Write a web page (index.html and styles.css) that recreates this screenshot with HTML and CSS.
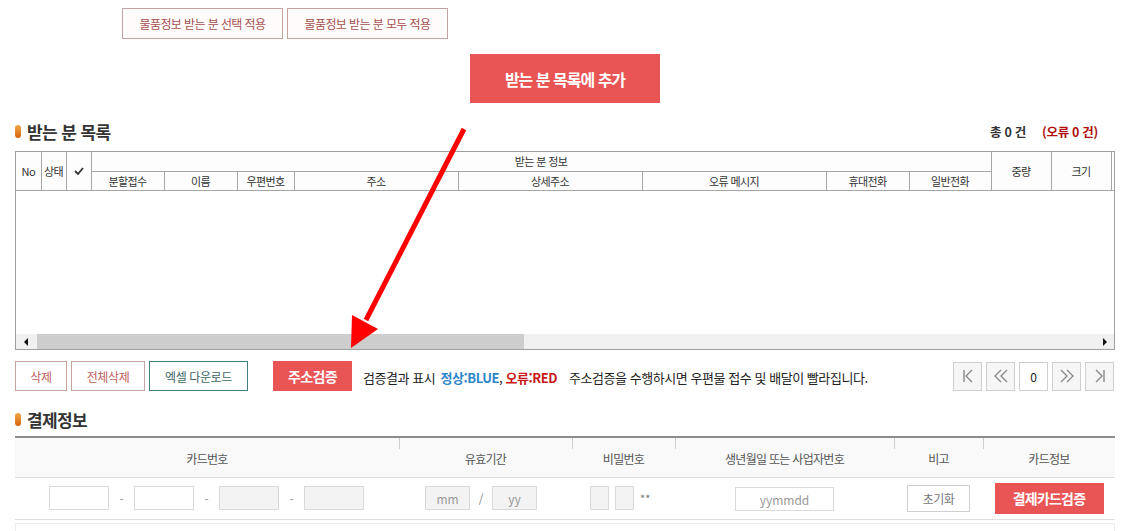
FILE: index.html
```html
<!DOCTYPE html>
<html lang="ko">
<head>
<meta charset="utf-8">
<title>받는 분 목록</title>
<link rel="stylesheet" href="styles.css">
</head>
<body>
<div class="page">
  <div class="apply-row">
    <button class="btn-line">물품정보 받는 분 선택 적용</button>
    <button class="btn-line">물품정보 받는 분 모두 적용</button>
  </div>
  <div class="add-row"><button class="btn-add">받는 분 목록에 추가</button></div>

  <div class="sec-head">
    <h2 class="sec-title"><span class="bullet"></span>받는 분 목록</h2>
    <div class="count">총 0 건 <span class="err">(오류 0 건)</span></div>
  </div>

  <div class="grid-box">
    <table class="grid-head">
      <colgroup>
        <col class="c25"><col class="c25"><col class="c25">
        <col class="c73"><col class="c73"><col class="c57"><col class="c164">
        <col class="c184"><col class="c184"><col class="c83"><col class="c82">
        <col class="c60"><col class="c60"><col class="c3">
      </colgroup>
      <tr class="r1">
        <th rowspan="2">No</th>
        <th rowspan="2">상태</th>
        <th rowspan="2" class="chk">
          <svg width="10" height="8" viewBox="0 0 10 8"><path d="M1 4 L4 7 L9 1" fill="none" stroke="#333" stroke-width="1.8"/></svg>
        </th>
        <th colspan="8">받는 분 정보</th>
        <th rowspan="2">중량</th>
        <th rowspan="2">크기</th>
        <th rowspan="2"></th>
      </tr>
      <tr class="r2">
        <th>분할접수</th><th>이름</th><th>우편번호</th><th>주소</th>
        <th>상세주소</th><th>오류 메시지</th><th>휴대전화</th><th>일반전화</th>
      </tr>
    </table>
    <div class="grid-body"></div>
    <div class="hscroll">
      <span class="arr arr-l"></span>
      <span class="thumb"></span>
      <span class="track"></span>
      <span class="arr arr-r"></span>
    </div>
  </div>

  <div class="action-row">
    <div class="actions-left">
      <button class="btn-sm btn-pink">삭제</button>
      <button class="btn-sm btn-pink w74">전체삭제</button>
      <button class="btn-sm btn-teal">엑셀 다운로드</button>
      <button class="btn-verify">주소검증</button>
      <p class="verify-note">검증결과 표시 <b class="ok">정상:BLUE</b>, <b class="bad">오류:RED</b><span class="hint">주소검증을 수행하시면 우편물 접수 및 배달이 빨라집니다.</span></p>
    </div>
    <div class="pager">
      <button class="pg">
        <svg width="14" height="14" viewBox="0 0 14 14"><path d="M3 1 V13 M11 1 L5 7 L11 13" fill="none" stroke="#8a8a8a" stroke-width="1.4"/></svg>
      </button>
      <button class="pg">
        <svg width="16" height="14" viewBox="0 0 16 14"><path d="M8 1 L2 7 L8 13 M14 1 L8 7 L14 13" fill="none" stroke="#8a8a8a" stroke-width="1.4"/></svg>
      </button>
      <span class="pg pg-num">0</span>
      <button class="pg">
        <svg width="16" height="14" viewBox="0 0 16 14"><path d="M2 1 L8 7 L2 13 M8 1 L14 7 L8 13" fill="none" stroke="#8a8a8a" stroke-width="1.4"/></svg>
      </button>
      <button class="pg">
        <svg width="14" height="14" viewBox="0 0 14 14"><path d="M3 1 L9 7 L3 13 M11 1 V13" fill="none" stroke="#8a8a8a" stroke-width="1.4"/></svg>
      </button>
    </div>
  </div>

  <div class="sec-head sec-pay">
    <h2 class="sec-title"><span class="bullet"></span>결제정보</h2>
  </div>

  <table class="pay">
    <colgroup>
      <col class="p1"><col class="p2"><col class="p3"><col class="p4"><col class="p5"><col class="p6">
    </colgroup>
    <tr class="pay-h">
      <th>카드번호</th><th>유효기간</th><th>비밀번호</th><th>생년월일 또는 사업자번호</th><th>비고</th><th>카드정보</th>
    </tr>
    <tr class="pay-r">
      <td>
        <div class="card-no">
          <span class="in w59"></span><span class="dash">-</span>
          <span class="in w59"></span><span class="dash">-</span>
          <span class="in w59 dis"></span><span class="dash">-</span>
          <span class="in w59 dis"></span>
        </div>
      </td>
      <td>
        <div class="exp">
          <span class="in w44 dis ph">mm</span><span class="slash">/</span><span class="in w44 dis ph">yy</span>
        </div>
      </td>
      <td>
        <div class="pw">
          <span class="in w19 dis"></span><span class="in w19 dis"></span><span class="stars">**</span>
        </div>
      </td>
      <td><span class="in w98 ph">yymmdd</span></td>
      <td><button class="btn-reset">초기화</button></td>
      <td><button class="btn-card">결제카드검증</button></td>
    </tr>
  </table>
  <div class="pay-foot"></div>

  <svg class="pointer" width="1141" height="531" viewBox="0 0 1141 531">
    <line x1="464" y1="129" x2="366" y2="320" stroke="#ff0000" stroke-width="5"/>
    <polygon points="351,348 352,315 378,329" fill="#ff0000"/>
  </svg>
</div>
</body>
</html>
```

FILE: styles.css
```css
* { box-sizing: border-box; }
html, body { margin: 0; padding: 0; background: #fff; }
body {
  font-family: "Noto Sans CJK KR", "Noto Sans", "Liberation Sans", sans-serif;
  color: #333;
  width: 1141px;
  height: 531px;
  overflow: hidden;
}
button { font-family: inherit; cursor: pointer; margin: 0; }
.page { width: 1100px; margin-left: 15px; position: relative; padding-top: 8px; }

/* top apply buttons */
.apply-row { display: flex; gap: 4px; padding-left: 107px; }
.btn-line {
  height: 31px; padding: 0; width: 161px;
  border: 1px solid #c4a3a3; background: #fffcfb;
  color: #a5504f; font-size: 12px; letter-spacing: -0.6px;
}
.add-row { display: flex; justify-content: center; margin-top: 15px; }
.btn-add {
  width: 190px; height: 49px; border: 0; background: #e95454;
  color: #fff; font-size: 16px; font-weight: 700; letter-spacing: -1px;
}

/* section heading */
.sec-head { display: flex; justify-content: space-between; align-items: center; height: 28px; margin-top: 14px; }
.sec-title { margin: 0; font-size: 17px; font-weight: 700; color: #333; letter-spacing: -0.6px; display: flex; align-items: center; }
.bullet {
  width: 6px; height: 13px; border-radius: 3px; margin-right: 6px;
  background: linear-gradient(#f4a84a, #d4640e);
}
.count { font-size: 12.5px; font-weight: 700; color: #333; padding-right: 17px; letter-spacing: -0.3px; }
.count .err { color: #b01010; margin-left: 13px; }

/* grid */
.grid-box { border: 1px solid #a0a0a0; height: 199px; margin-top: 6px; display: flex; flex-direction: column; }
.grid-head { border-collapse: collapse; table-layout: fixed; width: 1098px; }
.c25 { width: 25px; } .c73 { width: 73px; } .c57 { width: 57px; } .c164 { width: 164px; }
.c184 { width: 184px; } .c83 { width: 83px; } .c82 { width: 82px; } .c60 { width: 60px; } .c3 { width: 3px; }
.grid-head th {
  border: 1px solid #a6a6a6; border-top: 0; font-weight: 400; font-size: 11px;
  color: #333; background: #fdfdfd; padding: 0; letter-spacing: -0.6px; white-space: nowrap; overflow: hidden;
}
.grid-head th:first-child { border-left: 0; }
.grid-head th:last-child { border-right: 0; }
.grid-head .r1 th { height: 19px; }
.grid-head .r2 th { height: 19px; }
.grid-head .chk svg { display: block; margin: 0 auto; }
.grid-body { flex: 1; background: #fff; }
.hscroll { height: 15px; background: #f0f0f0; display: flex; align-items: center; }
.hscroll .arr { width: 0; height: 0; border-top: 4px solid transparent; border-bottom: 4px solid transparent; }
.arr-l { border-right: 4px solid #111; margin-left: 8px; margin-right: 9px; }
.arr-r { border-left: 4px solid #111; margin-left: 2px; margin-right: 7px; }
.thumb { width: 487px; height: 15px; background: #cdcdcd; }
.track { flex: 1; }

/* action row */
.action-row { display: flex; justify-content: space-between; align-items: center; margin-top: 11px; height: 30px; }
.actions-left { display: flex; align-items: center; }
.btn-sm { height: 30px; background: #fff; font-size: 12px; padding: 0; margin-right: 4px; letter-spacing: -0.4px; }
.btn-pink { width: 52px; border: 1px solid #c9a2a2; color: #c0605c; }
.btn-pink.w74 { width: 74px; }
.btn-teal { width: 99px; border: 1px solid #3f807e; color: #3c6766; }
.btn-verify {
  margin-left: 21px; width: 79px; height: 30px; border: 0; background: #e95454;
  color: #fff; font-weight: 700; font-size: 14px; letter-spacing: -0.6px;
}
.verify-note { margin: 0 0 0 11px; font-size: 13px; letter-spacing: -0.45px; color: #222; padding-top: 2px; }
.verify-note .ok { color: #2e86c9; margin-left: 2px; }
.verify-note .bad { color: #c81818; }
.verify-note .hint { margin-left: 12px; }
.pager { display: flex; gap: 4px; padding-right: 1px; }
.pg {
  width: 29px; height: 29px; border: 1px solid #cfcfcf; background: #f6f6f6;
  display: flex; align-items: center; justify-content: center; padding: 0;
}
.pg-num { width: 29px; background: #fff; font-size: 12px; color: #222; }

/* payment */
.sec-pay { margin-top: 14px; }
.pay { width: 1100px; border-collapse: collapse; table-layout: fixed; margin-top: 3px; border-top: 2px solid #8c8c8c; }
.p1 { width: 384px; } .p2 { width: 173px; } .p3 { width: 103px; } .p4 { width: 219px; } .p5 { width: 89px; } .p6 { width: 132px; }
.pay-h th {
  height: 40px; background: #f9f9f9; font-weight: 400; font-size: 12px; color: #555;
  letter-spacing: -0.7px; padding: 3px 0 0; position: relative; border-bottom: 1px solid #dedede;
}
.pay-h th + th::before {
  content: ""; position: absolute; left: 0; top: 0; width: 1px; height: 11px; background: #cfcfcf;
}
.pay-r td { height: 42px; text-align: center; border-bottom: 1px solid #dedede; padding: 0; }
.in {
  display: inline-flex; align-items: center; justify-content: center;
  height: 24px; border: 1px solid #dadada; background: #fff; vertical-align: middle;
  font-size: 12px; color: #999;
}
.in.dis { background: #f3f3f3; }
.w59 { width: 60px; } .w44 { width: 45px; } .w19 { width: 19px; } .w98 { width: 99px; }
.card-no, .exp, .pw { display: flex; align-items: center; justify-content: center; }
.card-no { justify-content: flex-start; padding-left: 34px; }
.dash { width: 25px; font-size: 12px; color: #999; text-align: center; }
.exp { justify-content: flex-start; padding-left: 26px; }
.slash { width: 22px; font-size: 12px; color: #888; text-align: center; }
.pw { gap: 6px; justify-content: flex-start; padding-left: 18px; }
.stars { font-size: 11px; color: #777; }
.btn-reset {
  width: 63px; height: 27px; border: 1px solid #cfcfcf; background: #fff;
  color: #777; font-size: 12px; letter-spacing: -0.5px; padding: 0; vertical-align: middle;
}
.btn-card {
  width: 109px; height: 31px; border: 0; background: #e95454; color: #fff;
  font-weight: 700; font-size: 14px; letter-spacing: -0.8px; padding: 0; vertical-align: middle;
}
.pay-foot { height: 12px; border: 1px solid #ececec; border-bottom: 0; margin-top: 3px; }

/* annotation arrow */
.pointer { position: absolute; left: -15px; top: 0; pointer-events: none; }
```
